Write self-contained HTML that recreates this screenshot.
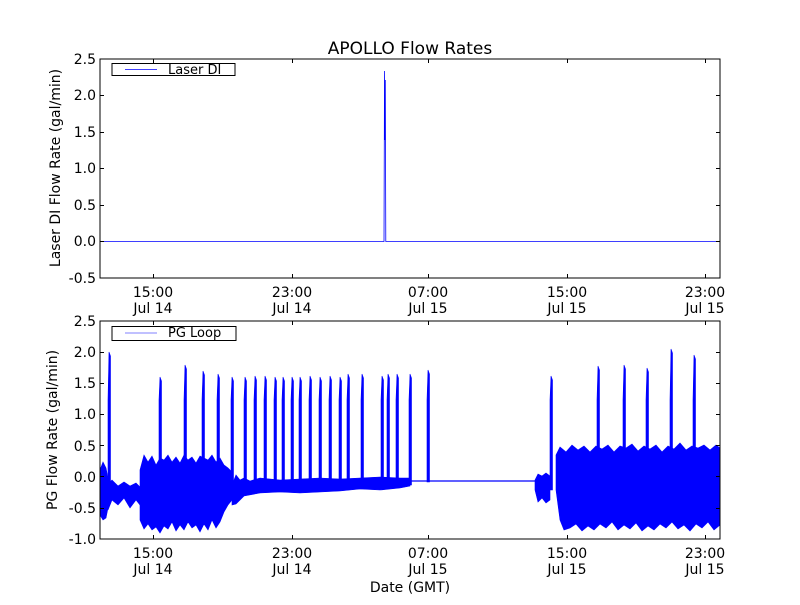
<!DOCTYPE html>
<html><head><meta charset="utf-8"><style>
html,body{margin:0;padding:0;background:#fff;}
svg text{font-family:"DejaVu Sans","Liberation Sans",sans-serif;fill:#000;}
</style></head><body>
<svg width="800" height="600" xmlns="http://www.w3.org/2000/svg">
<rect width="800" height="600" fill="#fff"/>
<text x="410" y="54" font-size="17" text-anchor="middle">APOLLO Flow Rates</text>
<!-- top plot data -->
<polyline points="100,241.5 384,241.5 384.5,71 385,140 385.3,80 385.8,241.5 720,241.5" fill="none" stroke="#0000ff" stroke-width="0.8"/>
<!-- bottom plot data -->
<g fill="#0000ff" stroke="#0000ff" stroke-width="0.6">
<polygon points="100,470 103,462 106,468 108,478 108,508 106,518 103,520 100,515"/>
<polygon points="108,484 112,480 118,486 124,482 130,486 136,483 140,487 140,505 136,500 130,508 124,498 118,505 112,500 108,510"/>
<polygon points="140,470 144,455 148,462 152,456 156,465 160,458 164,460 168,455 172,462 176,457 180,463 184,455 188,460 192,457 196,463 200,456 204,458 208,460 212,455 216,462 220,458 224,465 228,468 232,472 232,500 228,505 224,512 220,522 216,528 212,520 208,530 204,524 200,532 196,525 192,528 188,522 184,530 180,525 176,531 172,522 168,529 164,526 160,533 156,527 152,530 148,524 144,529 140,520"/>
<polygon points="232,485 236,475 240,480 244,478 250,481 260,478 280,480 300,479 320,478 340,479 360,478 380,477 400,478 410,478 410,486 400,488 380,490 360,489 340,491 320,492 300,493 280,492 260,493 244,496 240,500 236,504 232,505"/>
<polygon points="535,480 538,474 542,476 546,473 550,476 550,500 546,503 542,498 538,502 535,490"/>
<polygon points="556,455 560,447 566,452 572,445 578,450 584,446 590,452 596,446 602,449 608,445 614,452 620,446 626,448 632,444 638,451 644,446 650,449 656,445 662,452 668,446 674,449 680,443 686,450 692,446 698,448 704,445 710,450 716,445 720,448 720,525 714,530 708,522 702,528 696,524 690,531 684,525 678,529 672,522 666,528 660,524 654,530 648,526 642,531 636,523 630,529 624,525 618,530 612,522 606,528 600,524 594,530 588,526 582,531 576,524 570,528 564,530 560,520 556,490"/>
<path d="M108 485V400L109 352L110.5 356V485Z M159 485V400L160 377L161.5 381V485Z M184 485V400L185 365L186.5 369V485Z M202 485V400L203 371L204.5 375V485Z M217 485V400L218 374L219.5 378V485Z M231 485V400L232 377L233.5 381V485Z M244 485V400L245 377L246.5 381V485Z M254 485V400L255 376L256.5 380V485Z M264 485V400L265 376L266.5 380V485Z M274 485V400L275 377L276.5 381V485Z M282 485V400L283 377L284.5 381V485Z M291 485V400L292 377L293.5 381V485Z M299 485V400L300 377L301.5 381V485Z M309 485V400L310 376L311.5 380V485Z M319 485V400L320 377L321.5 381V485Z M329 485V400L330 376L331.5 380V485Z M339 485V400L340 377L341.5 381V485Z M347 485V400L348 374L349.5 378V485Z M361 485V400L362 374L363.5 378V485Z M381 485V400L382 376L383.5 380V485Z M387 485V400L388 374L389.5 378V485Z M396 485V400L397 374L398.5 378V485Z M409 485V400L410 374L411.5 378V485Z M427 482V400L428 370L429.5 374V482Z M550 490V400L551 376L552.5 380V490Z M597 485V400L598 366L599.5 370V485Z M623 485V400L624 365L625.5 369V485Z M646 485V400L647 368L648.5 372V485Z M670 485V400L671 349L672.5 353V485Z M693 485V400L694 355L695.5 359V485Z"/>
</g>
<line x1="410" y1="481" x2="535" y2="481" stroke="#0000ff" stroke-width="1.2"/>
<rect x="100" y="59" width="620" height="219" fill="none" stroke="#000" stroke-width="1"/>
<rect x="100" y="321" width="620" height="218" fill="none" stroke="#000" stroke-width="1"/>
<g stroke="#000" stroke-width="1">
<path d="M153.5 59v4M153.5 278v-4M153.5 321v4M153.5 539v-4 M292.5 59v4M292.5 278v-4M292.5 321v4M292.5 539v-4 M428.5 59v4M428.5 278v-4M428.5 321v4M428.5 539v-4 M567.5 59v4M567.5 278v-4M567.5 321v4M567.5 539v-4 M705.5 59v4M705.5 278v-4M705.5 321v4M705.5 539v-4"/>
<path d="M100 95.5h4M100 132.5h4M100 168.5h4M100 205.5h4M100 241.5h4M716 95.5h4M716 132.5h4M716 168.5h4M716 205.5h4M716 241.5h4"/>
<path d="M100 352.5h4M100 383.5h4M100 414.5h4M100 445.5h4M100 476.5h4M100 508.5h4M716 352.5h4M716 383.5h4M716 414.5h4M716 445.5h4M716 476.5h4M716 508.5h4"/>
</g>
<g font-size="14" text-anchor="end">
<text x="96" y="64">2.5</text><text x="96" y="100">2.0</text><text x="96" y="137">1.5</text>
<text x="96" y="173">1.0</text><text x="96" y="210">0.5</text><text x="96" y="246">0.0</text>
<text x="96" y="283">-0.5</text>
<text x="96" y="326">2.5</text><text x="96" y="357">2.0</text><text x="96" y="388">1.5</text>
<text x="96" y="419">1.0</text><text x="96" y="451">0.5</text><text x="96" y="482">0.0</text>
<text x="96" y="513">-0.5</text><text x="96" y="544">-1.0</text>
</g>
<g font-size="14" text-anchor="middle">
<text x="153" y="297">15:00</text><text x="153" y="313">Jul 14</text>
<text x="292" y="297">23:00</text><text x="292" y="313">Jul 14</text>
<text x="428" y="297">07:00</text><text x="428" y="313">Jul 15</text>
<text x="567" y="297">15:00</text><text x="567" y="313">Jul 15</text>
<text x="705" y="297">23:00</text><text x="705" y="313">Jul 15</text>
<text x="153" y="558">15:00</text><text x="153" y="574">Jul 14</text>
<text x="292" y="558">23:00</text><text x="292" y="574">Jul 14</text>
<text x="428" y="558">07:00</text><text x="428" y="574">Jul 15</text>
<text x="567" y="558">15:00</text><text x="567" y="574">Jul 15</text>
<text x="705" y="558">23:00</text><text x="705" y="574">Jul 15</text>
<text x="410" y="592">Date (GMT)</text>
</g>
<text font-size="14" text-anchor="middle" transform="translate(60,168) rotate(-90)">Laser DI Flow Rate (gal/min)</text>
<text font-size="14" text-anchor="middle" transform="translate(57,430) rotate(-90)">PG Flow Rate (gal/min)</text>
<rect x="112" y="63.5" width="123" height="12" fill="#fff" stroke="#000"/>
<line x1="125" y1="69.5" x2="157" y2="69.5" stroke="#4040ff"/>
<text x="168" y="74" font-size="13">Laser DI</text>
<rect x="112" y="326.5" width="124" height="14" fill="#fff" stroke="#000"/>
<line x1="125" y1="333" x2="157" y2="333" stroke="#8080ff"/>
<text x="168" y="337" font-size="13">PG Loop</text>
</svg>
</body></html>
